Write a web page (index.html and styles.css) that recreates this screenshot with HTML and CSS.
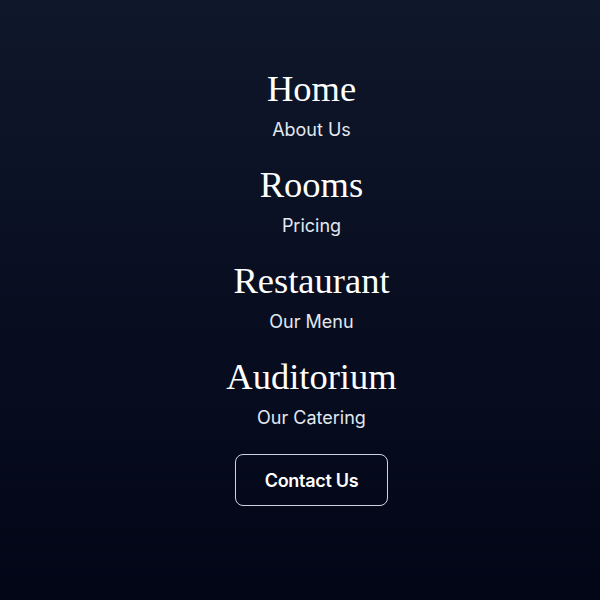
FILE: index.html
```html
<!DOCTYPE html>
<html lang="en">
<head>
<meta charset="utf-8">
<title>Menu</title>
<link rel="stylesheet" href="styles.css">
</head>
<body>
<nav class="menu">
  <div class="item">
    <a class="title" href="#">Home</a>
    <a class="sub" href="#">About Us</a>
  </div>
  <div class="item">
    <a class="title" href="#">Rooms</a>
    <a class="sub" href="#">Pricing</a>
  </div>
  <div class="item">
    <a class="title" href="#">Restaurant</a>
    <a class="sub" href="#">Our Menu</a>
  </div>
  <div class="item">
    <a class="title" href="#">Auditorium</a>
    <a class="sub" href="#">Our Catering</a>
  </div>
  <a class="contact" href="#">Contact Us</a>
</nav>
</body>
</html>
```

FILE: styles.css
```css
html, body {
  margin: 0;
  padding: 0;
  height: 100%;
}
body {
  background: linear-gradient(to bottom, #0f172a 0%, #020617 100%);
  font-family: Inter, "Noto Sans", sans-serif;
  color: #f8fafc;
}
.menu {
  display: flex;
  flex-direction: column;
  align-items: center;
  gap: 19px;
  padding-top: 67px;
  padding-left: 23px;
}
.item {
  display: flex;
  flex-direction: column;
  align-items: center;
  gap: 5px;
}
.title {
  font-family: "Liberation Serif", serif;
  font-size: 36.5px;
  line-height: 44px;
  color: #ffffff;
  text-decoration: none;
}
.sub {
  font-size: 18px;
  line-height: 28px;
  color: #e2e8f0;
  text-decoration: none;
}
.contact {
  margin-top: 3px;
  box-sizing: border-box;
  width: 153px;
  height: 52px;
  display: flex;
  align-items: center;
  justify-content: center;
  border: 1px solid #cbd5e1;
  border-radius: 8px;
  font-size: 18px;
  font-weight: 600;
  letter-spacing: -0.3px;
  color: #ffffff;
  text-decoration: none;
}
```
